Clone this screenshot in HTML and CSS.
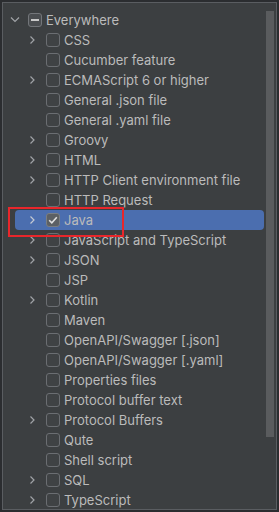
FILE: index.html
```html
<!DOCTYPE html>
<html lang="en">
<head>
    <meta charset="UTF-8">
    <meta name="viewport" content="width=device-width, initial-scale=1.0">
    <title>Scope</title>
    <link rel="stylesheet" href="styles.css">
</head>
<body>

<svg class="defs" width="0" height="0">
    <symbol id="chev-right" viewBox="0 0 16 16">
        <path d="M3.5 4.5 L7 8 L3.5 11.5" fill="none" stroke="currentColor" stroke-width="1.2"/>
    </symbol>
    <symbol id="chev-down" viewBox="0 0 16 16">
        <path d="M2 5.5 L6 9.5 L10 5.5" fill="none" stroke="currentColor" stroke-width="1.2"/>
    </symbol>
</svg>

<div class="popup">
    <div class="tree">
        <div class="row lvl0">
            <svg class="chev"><use href="#chev-down"/></svg>
            <span class="box mixed"></span>Everywhere
        </div>

        <div class="row lvl1"><svg class="chev"><use href="#chev-right"/></svg><span class="box"></span>CSS</div>
        <div class="row lvl1"><span class="chev"></span><span class="box"></span>Cucumber feature</div>
        <div class="row lvl1"><svg class="chev"><use href="#chev-right"/></svg><span class="box"></span>ECMAScript 6 or higher</div>
        <div class="row lvl1"><span class="chev"></span><span class="box"></span>General .json file</div>
        <div class="row lvl1"><span class="chev"></span><span class="box"></span>General .yaml file</div>
        <div class="row lvl1"><svg class="chev"><use href="#chev-right"/></svg><span class="box"></span>Groovy</div>
        <div class="row lvl1"><svg class="chev"><use href="#chev-right"/></svg><span class="box"></span>HTML</div>
        <div class="row lvl1"><svg class="chev"><use href="#chev-right"/></svg><span class="box"></span>HTTP Client environment file</div>
        <div class="row lvl1"><span class="chev"></span><span class="box"></span>HTTP Request</div>
        <div class="row lvl1 selected">
            <svg class="chev"><use href="#chev-right"/></svg>
            <span class="box checked">
                <svg viewBox="0 0 12 12"><path d="M2.2 6.2 L4.8 8.8 L9.8 3.2" fill="none" stroke="currentColor" stroke-width="1.6"/></svg>
            </span>Java
        </div>
        <div class="row lvl1"><svg class="chev"><use href="#chev-right"/></svg><span class="box"></span>JavaScript and TypeScript</div>
        <div class="row lvl1"><svg class="chev"><use href="#chev-right"/></svg><span class="box"></span>JSON</div>
        <div class="row lvl1"><span class="chev"></span><span class="box"></span>JSP</div>
        <div class="row lvl1"><svg class="chev"><use href="#chev-right"/></svg><span class="box"></span>Kotlin</div>
        <div class="row lvl1"><span class="chev"></span><span class="box"></span>Maven</div>
        <div class="row lvl1"><span class="chev"></span><span class="box"></span>OpenAPI/Swagger [.json]</div>
        <div class="row lvl1"><span class="chev"></span><span class="box"></span>OpenAPI/Swagger [.yaml]</div>
        <div class="row lvl1"><span class="chev"></span><span class="box"></span>Properties files</div>
        <div class="row lvl1"><span class="chev"></span><span class="box"></span>Protocol buffer text</div>
        <div class="row lvl1"><svg class="chev"><use href="#chev-right"/></svg><span class="box"></span>Protocol Buffers</div>
        <div class="row lvl1"><span class="chev"></span><span class="box"></span>Qute</div>
        <div class="row lvl1"><span class="chev"></span><span class="box"></span>Shell script</div>
        <div class="row lvl1"><svg class="chev"><use href="#chev-right"/></svg><span class="box"></span>SQL</div>
        <div class="row lvl1"><svg class="chev"><use href="#chev-right"/></svg><span class="box"></span>TypeScript</div>
    </div>

    <div class="scrollbar">
        <div class="thumb"></div>
    </div>

    <!-- highlight drawn over the screenshot -->
    <div class="callout"></div>
</div>

</body>
</html>
```

FILE: styles.css
```css
body {
    margin: 0;
    background: #2b2d30;
    font-family: Inter, "Noto Sans", sans-serif;
}
.defs {
    position: absolute;
}
.popup {
    position: relative;
    width: 275px;
    height: 508px;
    margin: 2px;
    box-sizing: border-box;
    border: 1px solid #5a5d61;
    background: #3c3f41;
    display: flex;
    overflow: hidden;
}
.tree {
    flex: 1;
    padding-top: 7px;
    overflow: hidden;
}
.row {
    height: 20px;
    display: flex;
    align-items: center;
    margin-right: 2px;
    border-radius: 4px;
    color: #bbbbbb;
    font-size: 13px;
    white-space: nowrap;
}
.lvl0 {
    padding-left: 6px;
}
.lvl1 {
    padding-left: 24px;
}
.row.selected {
    background: #4b6eaf;
    margin-left: 12px;
    padding-left: 12px;
}
.chev {
    flex: none;
    width: 16px;
    height: 16px;
    margin-right: 3px;
    color: #a0a3a7;
}
.selected .chev {
    color: #c5cad3;
}
.box {
    flex: none;
    width: 14px;
    height: 14px;
    box-sizing: border-box;
    margin-right: 4px;
    border: 1px solid #6b6e72;
    border-radius: 3px;
    background: #3f4244;
    display: flex;
    align-items: center;
    justify-content: center;
}
.box svg {
    width: 12px;
    height: 12px;
}
.box.checked {
    background: #5c6064;
    border-color: #7a7e82;
    color: #e0e0e0;
}
.box.mixed {
    background: #4a4d50;
    border-color: #73767a;
}
.box.mixed::after {
    content: "";
    width: 8px;
    height: 2px;
    background: #c9c9c9;
}
.scrollbar {
    width: 10px;
    flex: none;
}
.thumb {
    width: 8px;
    height: 426px;
    margin-top: 8px;
    background: #5a5c5e;
}
.callout {
    position: absolute;
    left: 5px;
    top: 204px;
    width: 116px;
    height: 30px;
    box-sizing: border-box;
    border: 2px solid #e8262b;
}
```
